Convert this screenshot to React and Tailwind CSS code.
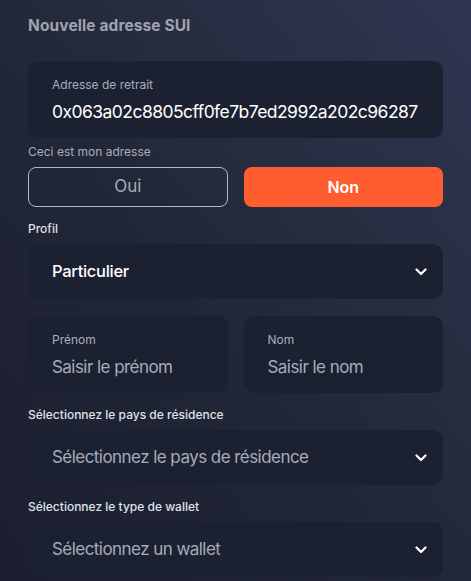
import React from "react";

const Chevron = () => (
  <svg width="12" height="8" viewBox="0 0 12 8" fill="none">
    <path d="M1.5 1.5L6 6L10.5 1.5" stroke="#ffffff" strokeWidth="2.2" strokeLinecap="round" strokeLinejoin="round" />
  </svg>
);

function Select({ text, bright }) {
  return (
    <div className="h-[55px] rounded-[10px] bg-[#1c2132] flex items-center justify-between pl-6 pr-4">
      <span className={bright ? "text-[16.5px] text-white font-medium tracking-[-0.3px]" : "text-[17px] text-[#a6abb8] tracking-[-0.55px]"}>{text}</span>
      <Chevron />
    </div>
  );
}

function Field({ label, value, bright }) {
  return (
    <div className="h-[77px] rounded-[10px] bg-[#1c2132] flex flex-col justify-center pl-6 pr-4">
      <span className="text-[12px] text-[#a9aebb] leading-[16px]">{label}</span>
      <span className={bright ? "mt-[8px] text-[17.5px] text-white leading-[22px] tracking-[-0.55px]" : "mt-[8px] text-[17px] text-[#a6abb8] leading-[22px] tracking-[-0.55px]"}>{value}</span>
    </div>
  );
}

export default function App() {
  return (
    <div
      className="w-[471px] h-[581px] overflow-hidden bg-gradient-to-bl from-[#303651] via-[#232839] to-[#1a1e2e] px-7"
      style={{ fontFamily: "Inter, 'Noto Sans', sans-serif" }}
    >
      <div className="pt-[15px] text-[15.5px] font-bold text-[#9ea3ae] leading-[22px] tracking-[0.1px]">Nouvelle adresse SUI</div>
      <div className="mt-[24px]">
        <Field label="Adresse de retrait" value="0x063a02c8805cff0fe7b7ed2992a202c96287" bright />
      </div>
      <div className="mt-[6px] text-[12px] text-[#a9aebb] leading-[16px]">Ceci est mon adresse</div>
      <div className="mt-[7px] grid grid-cols-2 gap-4">
        <div className="h-[40px] rounded-[8px] border border-[#b4b8c4] flex items-center justify-center text-[17px] text-[#a6abb8]">Oui</div>
        <div className="h-[40px] rounded-[8px] bg-[#ff5c2f] flex items-center justify-center text-[16px] font-semibold text-white">Non</div>
      </div>
      <div className="mt-[14px] text-[12px] font-medium text-[#dfe2e8] leading-[16px]">Profil</div>
      <div className="mt-[7px]">
        <Select text="Particulier" bright />
      </div>
      <div className="mt-[17px] grid grid-cols-2 gap-4">
        <Field label="Prénom" value="Saisir le prénom" />
        <Field label="Nom" value="Saisir le nom" />
      </div>
      <div className="mt-[14px] text-[12px] font-medium text-[#dfe2e8] leading-[16px]">Sélectionnez le pays de résidence</div>
      <div className="mt-[7px]">
        <Select text="Sélectionnez le pays de résidence" />
      </div>
      <div className="mt-[14px] text-[12px] font-medium text-[#dfe2e8] leading-[16px]">Sélectionnez le type de wallet</div>
      <div className="mt-[7px]">
        <Select text="Sélectionnez un wallet" />
      </div>
    </div>
  );
}
